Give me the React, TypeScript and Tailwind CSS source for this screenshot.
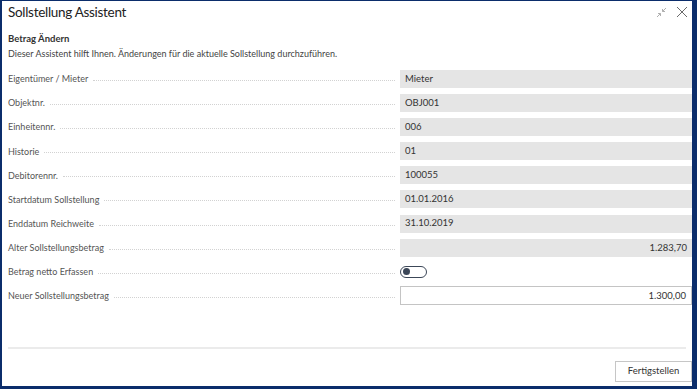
import React from 'react';

const font = { fontFamily: 'Lato, "Open Sans", sans-serif' };

const rows: { label: string; value?: string; align?: 'left' | 'right'; kind?: 'ro' | 'toggle' | 'edit' }[] = [
  { label: 'Eigentümer / Mieter', value: 'Mieter' },
  { label: 'Objektnr.', value: 'OBJ001' },
  { label: 'Einheitennr.', value: '006' },
  { label: 'Historie', value: '01' },
  { label: 'Debitorennr.', value: '100055' },
  { label: 'Startdatum Sollstellung', value: '01.01.2016' },
  { label: 'Enddatum Reichweite', value: '31.10.2019' },
  { label: 'Alter Sollstellungsbetrag', value: '1.283,70', align: 'right' },
  { label: 'Betrag netto Erfassen', kind: 'toggle' },
  { label: 'Neuer Sollstellungsbetrag', value: '1.300,00', align: 'right', kind: 'edit' },
];

function Field({ r }: { r: (typeof rows)[number] }) {
  if (r.kind === 'toggle') {
    return (
      <div className="w-[292px] h-[18px] flex items-center">
        <div className="w-[27px] h-[12px] rounded-full border border-[#3c4758] flex items-center pl-[2px]">
          <div className="w-[7px] h-[7px] rounded-full bg-[#3c4758]" />
        </div>
      </div>
    );
  }
  const base = 'w-[292px] h-[18px] flex items-center px-[5px] text-[9.5px] text-[#333]';
  const align = r.align === 'right' ? 'justify-end' : 'justify-start';
  const look = r.kind === 'edit' ? 'bg-white border border-[#c4c4c4] h-[19px]' : 'bg-[#e5e5e5]';
  return <div className={`${base} ${align} ${look}`}>{r.value}</div>;
}

export default function App() {
  return (
    <div
      className="w-[697px] h-[389px] bg-white border-t border-l-2 border-r-[5px] border-b-[3px] border-[#0b2d6b] flex flex-col overflow-hidden"
      style={font}
    >
      <div className="flex items-start justify-between pl-[6px] pr-[4px] pt-[1px]">
        <h1 className="text-[13.5px] leading-[20px] text-[#222] tracking-[-0.3px]">Sollstellung Assistent</h1>
        <div className="flex items-center gap-[9px] pt-[4px]">
          <svg width="11" height="11" viewBox="0 0 11 11" fill="none" stroke="#b0b0b0" strokeWidth="1">
            <path d="M1 10 L4.5 6.5 M2 6.5 H4.5 V9" />
            <path d="M10 1 L6.5 4.5 M9 4.5 H6.5 V2" />
          </svg>
          <svg width="12" height="12" viewBox="0 0 12 12" fill="none" stroke="#6a6a6a" strokeWidth="1">
            <path d="M1 1 L11 11 M11 1 L1 11" />
          </svg>
        </div>
      </div>

      <div className="pl-[6px] pt-[10px]">
        <div className="text-[9.5px] leading-[13px] font-bold text-[#333]">Betrag Ändern</div>
        <div className="text-[9px] leading-[13px] mt-[2px] text-[#444]">
          Dieser Assistent hilft Ihnen. Änderungen für die aktuelle Sollstellung durchzuführen.
        </div>
      </div>

      <div className="flex flex-col gap-[6.1px] pt-[10px] pl-[6px]">
        {rows.map((r, i) => (
          <div key={i} className="flex items-center h-[18px]">
            <span className="text-[9px] text-[#555] whitespace-nowrap">{r.label}</span>
            <span className="flex-1 mx-[5px] mt-[3px] border-b border-dotted border-[#d2d2d2]" />
            <Field r={r} />
          </div>
        ))}
      </div>

      <div className="flex-1" />

      <div className="mx-[6px] h-[2px] bg-[#ebebeb]" />
      <div className="flex justify-end pt-[12px] pb-[4px]">
        <button className="w-[77px] h-[21px] border border-[#c6c6c6] bg-white text-[9.5px] text-[#333]">
          Fertigstellen
        </button>
      </div>
    </div>
  );
}
